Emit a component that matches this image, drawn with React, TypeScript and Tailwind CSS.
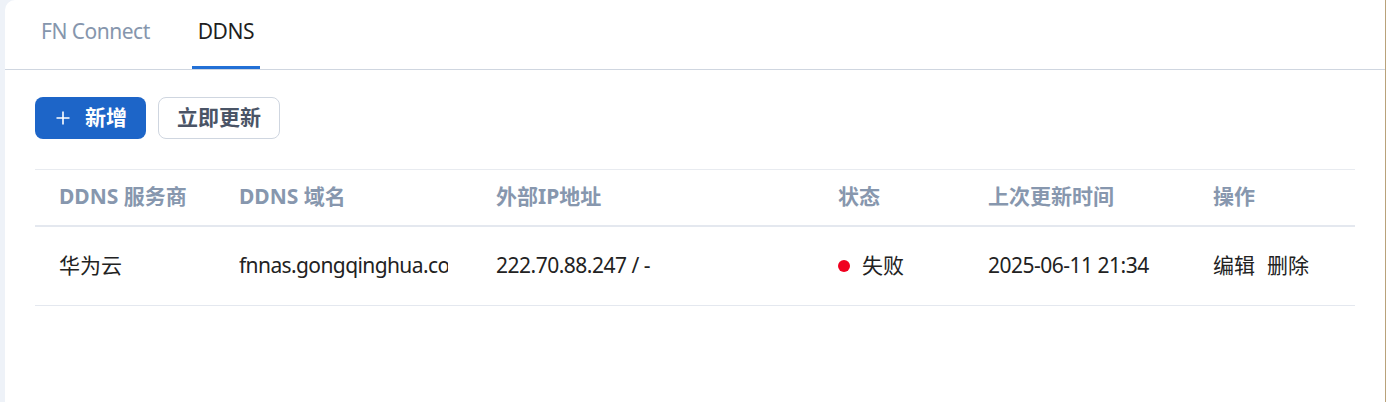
import React from "react";

const font = { fontFamily: '"Noto Sans", "Noto Sans CJK SC", sans-serif' };

export default function App() {
  const cols = "grid grid-cols-[180px_257px_342px_150px_225px_166px]";
  return (
    <div className="w-[1386px] h-[402px] bg-[#eef2f8] flex" style={font}>
      <div className="ml-[5px] flex-1 bg-white rounded-tl-[10px] border-r border-[#b9a27a] flex flex-col">
        <div className="h-[70px] border-b border-[#cfd6e0] flex pl-[30px] gap-[36px] tracking-[-0.5px]">
          <div className="relative flex items-center px-[6px] pb-[6px] text-[21px] text-[#8696ad]">
            FN Connect
          </div>
          <div className="relative flex items-center px-[6px] pb-[6px] text-[21px] text-[#1f1f1f]">
            DDNS
            <div className="absolute left-0 right-0 bottom-0 h-[3px] bg-[#2270d6]" />
          </div>
        </div>
        <div className="px-[30px] pt-[27px]">
          <div className="flex gap-[12px]">
            <button className="h-[42px] w-[111px] rounded-[8px] bg-[#1d65c8] text-white flex items-center pl-[21px] text-[21px] font-bold">
              <svg width="14" height="14" viewBox="0 0 14 14" className="mr-[15px]">
                <path d="M7 0.5V13.5M0.5 7H13.5" stroke="white" strokeWidth="1.6" />
              </svg>
              新增
            </button>
            <button className="h-[42px] w-[122px] rounded-[8px] border border-[#cfd6e0] bg-white text-[#4a5466] flex items-center justify-center text-[21px] font-bold">
              立即更新
            </button>
          </div>
          <div className="mt-[30px] border-t border-[#e8ebf0]">
            <div className={`${cols} h-[57px] border-b-2 border-[#e4e8ef] items-center text-[21px] font-bold text-[#8797ae]`}>
              <div className="px-[24px] pb-[1px]">DDNS 服务商</div>
              <div className="px-[24px] pb-[1px]">DDNS 域名</div>
              <div className="px-[24px] pb-[1px]">外部IP地址</div>
              <div className="px-[24px] pb-[1px]">状态</div>
              <div className="px-[24px] pb-[1px]">上次更新时间</div>
              <div className="px-[24px] pb-[1px]">操作</div>
            </div>
            <div className={`${cols} h-[79px] border-b border-[#e4e8ef] items-center text-[21px] text-[#222222]`}>
              <div className="px-[24px]">华为云</div>
              <div className="px-[24px]">
                <div className="overflow-hidden whitespace-nowrap tracking-[-0.6px]">fnnas.gongqinghua.com</div>
              </div>
              <div className="px-[24px] tracking-[-0.5px]">222.70.88.247 / -</div>
              <div className="px-[24px] flex items-center">
                <span className="w-[12px] h-[12px] rounded-full bg-[#f0001f] mr-[12px]" />
                失败
              </div>
              <div className="px-[24px] tracking-[-0.5px]">2025-06-11 21:34</div>
              <div className="px-[24px] flex gap-[12px]">
                <span>编辑</span>
                <span>删除</span>
              </div>
            </div>
          </div>
        </div>
      </div>
    </div>
  );
}
